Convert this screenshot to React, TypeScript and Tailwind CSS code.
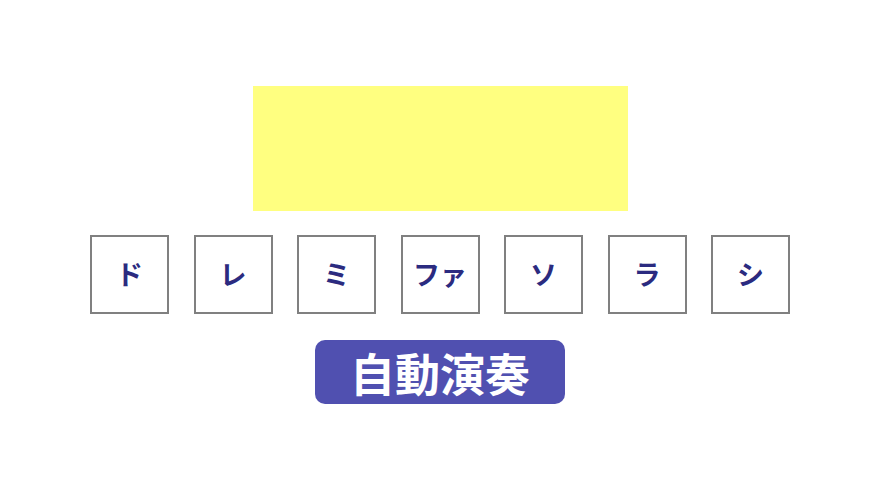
const notes = ['ド', 'レ', 'ミ', 'ファ', 'ソ', 'ラ', 'シ'];

export default function App() {
  return (
    <div
      className="flex h-[488px] w-[880px] flex-col items-center bg-white pt-[86px]"
      style={{ fontFamily: '"Noto Sans CJK JP", "Noto Sans", sans-serif' }}
    >
      <div className="h-[125px] w-[375px] bg-[#ffff80]" />
      <div className="mt-[24px] flex gap-[24.5px]">
        {notes.map((note) => (
          <button
            key={note}
            className="flex h-[79px] w-[79px] items-center justify-center border-2 border-[#808080] bg-white text-[27px] font-bold text-[#2b2b80]"
          >
            {note}
          </button>
        ))}
      </div>
      <button className="mt-[26px] flex h-[64px] w-[250px] items-center justify-center rounded-[10px] bg-[#5050b0] text-[45px] font-bold leading-none text-white">
        自動演奏
      </button>
    </div>
  );
}
